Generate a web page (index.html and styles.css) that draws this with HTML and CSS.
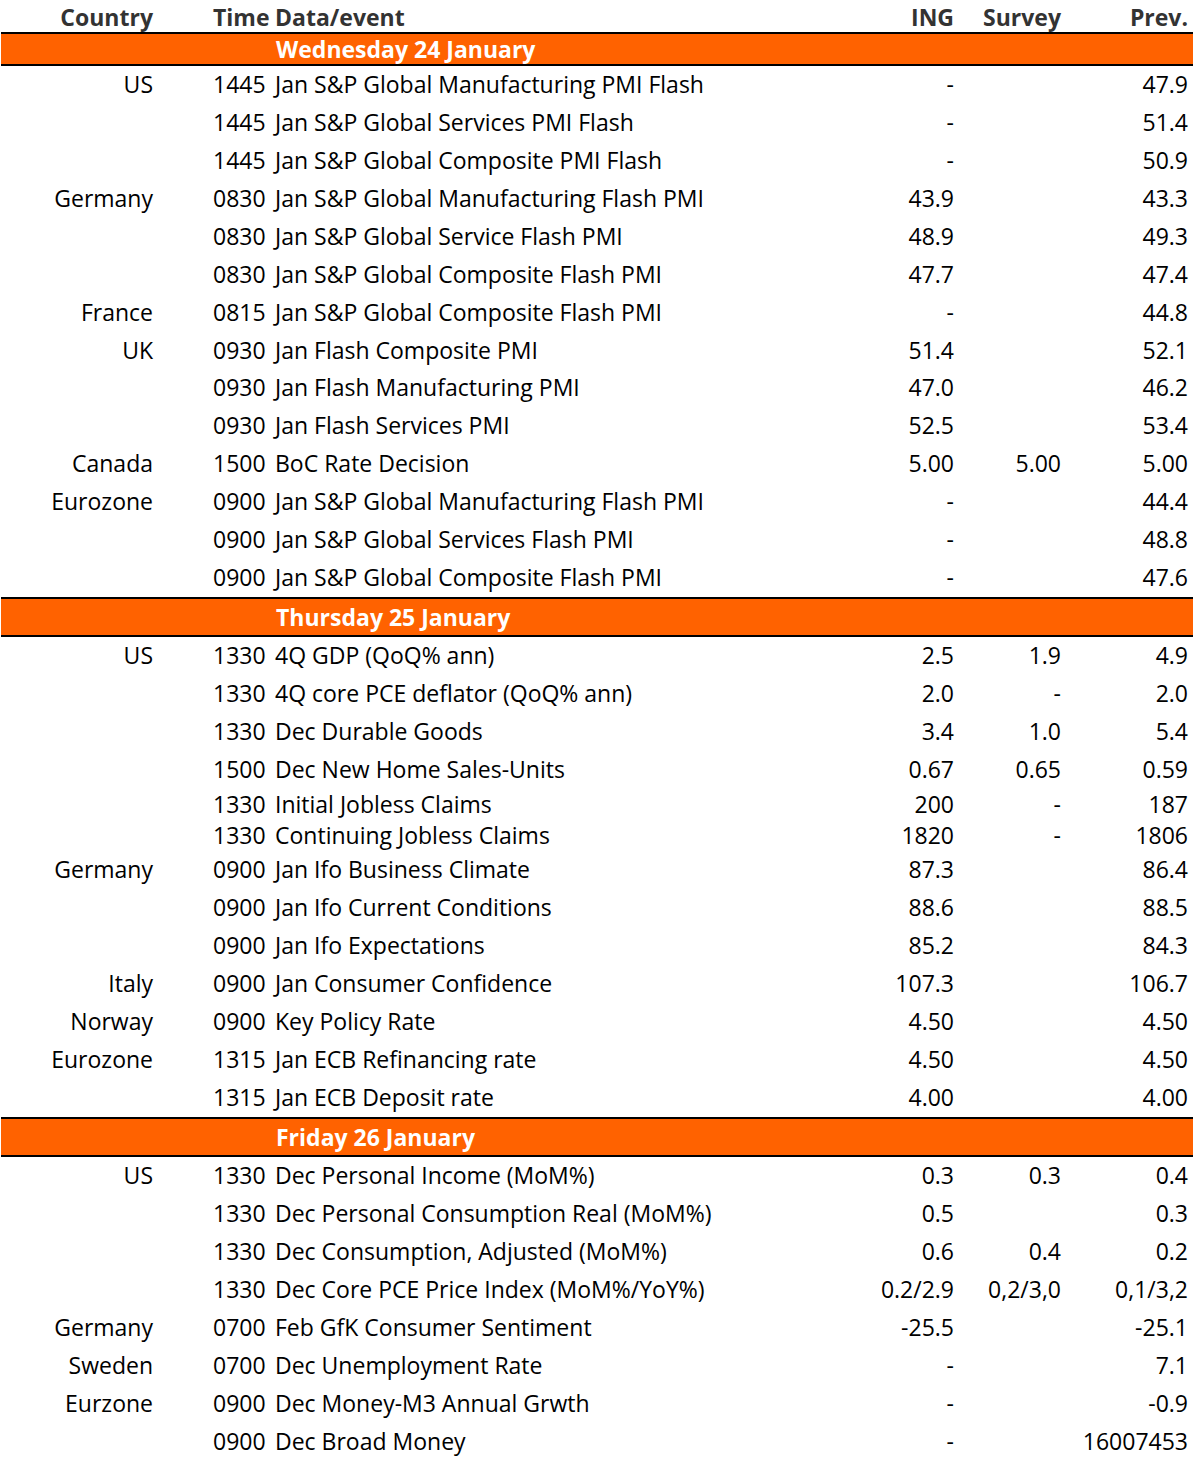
FILE: index.html
```html
<!DOCTYPE html>
<html lang="en">
<head>
<meta charset="utf-8">
<title>Economic calendar</title>
<link rel="stylesheet" href="styles.css">
</head>
<body>
<div class="cal">
  <div class="row head">
    <div class="c country">Country</div>
    <div class="c time">Time</div>
    <div class="c event">Data/event</div>
    <div class="c ing">ING</div>
    <div class="c survey">Survey</div>
    <div class="c prev">Prev.</div>
  </div>

  <div class="row day first"><div class="c daylabel">Wednesday 24 January</div></div>
  <div class="sec one">
  <div class="row"><div class="c country">US</div><div class="c time">1445</div><div class="c event">Jan S&amp;P Global Manufacturing PMI Flash</div><div class="c ing">-</div><div class="c survey"></div><div class="c prev">47.9</div></div>
  <div class="row"><div class="c country"></div><div class="c time">1445</div><div class="c event">Jan S&amp;P Global Services PMI Flash</div><div class="c ing">-</div><div class="c survey"></div><div class="c prev">51.4</div></div>
  <div class="row"><div class="c country"></div><div class="c time">1445</div><div class="c event">Jan S&amp;P Global Composite PMI Flash</div><div class="c ing">-</div><div class="c survey"></div><div class="c prev">50.9</div></div>
  <div class="row"><div class="c country">Germany</div><div class="c time">0830</div><div class="c event">Jan S&amp;P Global Manufacturing Flash PMI</div><div class="c ing">43.9</div><div class="c survey"></div><div class="c prev">43.3</div></div>
  <div class="row"><div class="c country"></div><div class="c time">0830</div><div class="c event">Jan S&amp;P Global Service Flash PMI</div><div class="c ing">48.9</div><div class="c survey"></div><div class="c prev">49.3</div></div>
  <div class="row"><div class="c country"></div><div class="c time">0830</div><div class="c event">Jan S&amp;P Global Composite Flash PMI</div><div class="c ing">47.7</div><div class="c survey"></div><div class="c prev">47.4</div></div>
  <div class="row"><div class="c country">France</div><div class="c time">0815</div><div class="c event">Jan S&amp;P Global Composite Flash PMI</div><div class="c ing">-</div><div class="c survey"></div><div class="c prev">44.8</div></div>
  <div class="row"><div class="c country">UK</div><div class="c time">0930</div><div class="c event">Jan Flash Composite PMI</div><div class="c ing">51.4</div><div class="c survey"></div><div class="c prev">52.1</div></div>
  <div class="row"><div class="c country"></div><div class="c time">0930</div><div class="c event">Jan Flash Manufacturing PMI</div><div class="c ing">47.0</div><div class="c survey"></div><div class="c prev">46.2</div></div>
  <div class="row"><div class="c country"></div><div class="c time">0930</div><div class="c event">Jan Flash Services PMI</div><div class="c ing">52.5</div><div class="c survey"></div><div class="c prev">53.4</div></div>
  <div class="row"><div class="c country">Canada</div><div class="c time">1500</div><div class="c event">BoC Rate Decision</div><div class="c ing">5.00</div><div class="c survey">5.00</div><div class="c prev">5.00</div></div>
  <div class="row"><div class="c country">Eurozone</div><div class="c time">0900</div><div class="c event">Jan S&amp;P Global Manufacturing Flash PMI</div><div class="c ing">-</div><div class="c survey"></div><div class="c prev">44.4</div></div>
  <div class="row"><div class="c country"></div><div class="c time">0900</div><div class="c event">Jan S&amp;P Global Services Flash PMI</div><div class="c ing">-</div><div class="c survey"></div><div class="c prev">48.8</div></div>
  <div class="row"><div class="c country"></div><div class="c time">0900</div><div class="c event">Jan S&amp;P Global Composite Flash PMI</div><div class="c ing">-</div><div class="c survey"></div><div class="c prev">47.6</div></div>
  </div>

  <div class="row day"><div class="c daylabel">Thursday 25 January</div></div>
  <div class="sec">
  <div class="row"><div class="c country">US</div><div class="c time">1330</div><div class="c event">4Q GDP (QoQ% ann)</div><div class="c ing">2.5</div><div class="c survey">1.9</div><div class="c prev">4.9</div></div>
  <div class="row"><div class="c country"></div><div class="c time">1330</div><div class="c event">4Q core PCE deflator (QoQ% ann)</div><div class="c ing">2.0</div><div class="c survey">-</div><div class="c prev">2.0</div></div>
  <div class="row"><div class="c country"></div><div class="c time">1330</div><div class="c event">Dec Durable Goods</div><div class="c ing">3.4</div><div class="c survey">1.0</div><div class="c prev">5.4</div></div>
  <div class="row"><div class="c country"></div><div class="c time">1500</div><div class="c event">Dec New Home Sales-Units</div><div class="c ing">0.67</div><div class="c survey">0.65</div><div class="c prev">0.59</div></div>
  <div class="row short"><div class="c country"></div><div class="c time">1330</div><div class="c event">Initial Jobless Claims</div><div class="c ing">200</div><div class="c survey">-</div><div class="c prev">187</div></div>
  <div class="row short"><div class="c country"></div><div class="c time">1330</div><div class="c event">Continuing Jobless Claims</div><div class="c ing">1820</div><div class="c survey">-</div><div class="c prev">1806</div></div>
  <div class="row"><div class="c country">Germany</div><div class="c time">0900</div><div class="c event">Jan Ifo Business Climate</div><div class="c ing">87.3</div><div class="c survey"></div><div class="c prev">86.4</div></div>
  <div class="row"><div class="c country"></div><div class="c time">0900</div><div class="c event">Jan Ifo Current Conditions</div><div class="c ing">88.6</div><div class="c survey"></div><div class="c prev">88.5</div></div>
  <div class="row"><div class="c country"></div><div class="c time">0900</div><div class="c event">Jan Ifo Expectations</div><div class="c ing">85.2</div><div class="c survey"></div><div class="c prev">84.3</div></div>
  <div class="row"><div class="c country">Italy</div><div class="c time">0900</div><div class="c event">Jan Consumer Confidence</div><div class="c ing">107.3</div><div class="c survey"></div><div class="c prev">106.7</div></div>
  <div class="row"><div class="c country">Norway</div><div class="c time">0900</div><div class="c event">Key Policy Rate</div><div class="c ing">4.50</div><div class="c survey"></div><div class="c prev">4.50</div></div>
  <div class="row"><div class="c country">Eurozone</div><div class="c time">1315</div><div class="c event">Jan ECB Refinancing rate</div><div class="c ing">4.50</div><div class="c survey"></div><div class="c prev">4.50</div></div>
  <div class="row"><div class="c country"></div><div class="c time">1315</div><div class="c event">Jan ECB Deposit rate</div><div class="c ing">4.00</div><div class="c survey"></div><div class="c prev">4.00</div></div>
  </div>

  <div class="row day"><div class="c daylabel">Friday 26 January</div></div>
  <div class="sec">
  <div class="row"><div class="c country">US</div><div class="c time">1330</div><div class="c event">Dec Personal Income (MoM%)</div><div class="c ing">0.3</div><div class="c survey">0.3</div><div class="c prev">0.4</div></div>
  <div class="row"><div class="c country"></div><div class="c time">1330</div><div class="c event">Dec Personal Consumption Real (MoM%)</div><div class="c ing">0.5</div><div class="c survey"></div><div class="c prev">0.3</div></div>
  <div class="row"><div class="c country"></div><div class="c time">1330</div><div class="c event">Dec Consumption, Adjusted (MoM%)</div><div class="c ing">0.6</div><div class="c survey">0.4</div><div class="c prev">0.2</div></div>
  <div class="row"><div class="c country"></div><div class="c time">1330</div><div class="c event">Dec Core PCE Price Index (MoM%/YoY%)</div><div class="c ing">0.2/2.9</div><div class="c survey">0,2/3,0</div><div class="c prev">0,1/3,2</div></div>
  <div class="row"><div class="c country">Germany</div><div class="c time">0700</div><div class="c event">Feb GfK Consumer Sentiment</div><div class="c ing">-25.5</div><div class="c survey"></div><div class="c prev">-25.1</div></div>
  <div class="row"><div class="c country">Sweden</div><div class="c time">0700</div><div class="c event">Dec Unemployment Rate</div><div class="c ing">-</div><div class="c survey"></div><div class="c prev">7.1</div></div>
  <div class="row"><div class="c country">Eurzone</div><div class="c time">0900</div><div class="c event">Dec Money-M3 Annual Grwth</div><div class="c ing">-</div><div class="c survey"></div><div class="c prev">-0.9</div></div>
  <div class="row"><div class="c country"></div><div class="c time">0900</div><div class="c event">Dec Broad Money</div><div class="c ing">-</div><div class="c survey"></div><div class="c prev">16007453</div></div>
  </div>
</div>
</body>
</html>
```

FILE: styles.css
```css
html, body {
  margin: 0;
  padding: 0;
  background: #ffffff;
}

body {
  font-family: "Open Sans", "Noto Sans", "Liberation Sans", sans-serif;
  font-size: 23px;
  color: #000000;
}

.cal {
  width: 1192px;
  margin-left: 1px;
}

.row {
  display: grid;
  grid-template-columns: 159px 112px 588px 102px 106px 125px;
  height: 38px;
  align-items: center;
  white-space: nowrap;
}

.sec.one .row {
  height: 37.95px;
}

.row.short {
  height: 31px;
}

.c {
  line-height: 1;
  padding-bottom: 1px;
}

.country { text-align: right; padding-right: 7px; }
.time { padding-left: 53px; }
.event { padding-left: 3px; }
.ing { text-align: right; padding-right: 8px; }
.survey { text-align: right; padding-right: 7px; }
.prev { text-align: right; padding-right: 5px; }

.head {
  height: 32px;
  font-weight: 700;
  color: #333333;
}

.head .c {
  padding-bottom: 0;
  padding-top: 3px;
}

.day {
  height: 36px;
  box-sizing: content-box;
  background: #ff6200;
  border-top: 2px solid #000000;
  border-bottom: 2px solid #000000;
  grid-template-columns: 271px 1fr;
}

.day.first {
  height: 30px;
}

.daylabel {
  grid-column: 2;
  padding-left: 4px;
  padding-bottom: 0;
  padding-top: 1px;
  color: #ffffff;
  font-weight: 700;
}
```
